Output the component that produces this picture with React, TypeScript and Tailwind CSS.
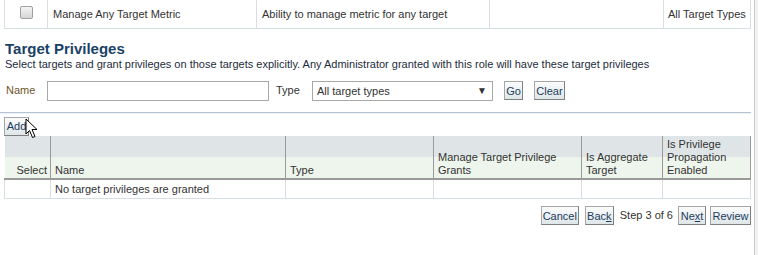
import React from "react";

const font = { fontFamily: "Tahoma, 'Liberation Sans', Arial, sans-serif" };

function Btn({ children, className = "" }: { children: React.ReactNode; className?: string }) {
  return (
    <button
      className={`h-[19px] px-0 text-center border border-[#a6a6a6] border-b-[#7f7f7f] border-r-[#7f7f7f] bg-gradient-to-b from-[#fbfcfc] to-[#dfe6e8] leading-[16px] text-[#1c3d5e] whitespace-nowrap ${className}`}
    >
      {children}
    </button>
  );
}

const head = "align-bottom text-left font-normal pl-[4px] pb-[1px] leading-[13px] border-l border-[#9a9a9a] bg-gradient-to-b from-[#dfe4e6] from-50% to-[#eef5ec] to-50%";

export default function App() {
  return (
    <div className="flex w-[758px] h-[255px] bg-white overflow-hidden text-[11px] text-[#333]" style={font}>
      <div className="w-[754px] shrink-0">
        {/* previous privilege row */}
        <table className="ml-[4px] w-[747px] table-fixed border-collapse">
          <colgroup>
            <col className="w-[43px]" />
            <col className="w-[209px]" />
            <col className="w-[233px]" />
            <col className="w-[174px]" />
            <col />
          </colgroup>
          <tbody>
            <tr className="h-[28px] border-b border-[#d8dfe3]">
              <td className="border-l border-r border-[#d8dfe3] text-center">
                <span className="inline-block w-[13px] h-[13px] mt-[2px] rounded-[2px] border border-[#a0a0a0] bg-gradient-to-b from-[#f4f4f4] to-[#d6d6d6]" />
              </td>
              <td className="border-r border-[#d8dfe3] pl-[5px]">Manage Any Target Metric</td>
              <td className="border-r border-[#d8dfe3] pl-[5px]">Ability to manage metric for any target</td>
              <td className="border-r border-[#d8dfe3]"></td>
              <td className="border-r border-[#d8dfe3] pl-[4px] whitespace-nowrap">All Target Types</td>
            </tr>
          </tbody>
        </table>

        <div className="pl-[5px] pt-[10px]">
          <h2 className="text-[15px] font-bold leading-[19px] text-[#1a4266]">Target Privileges</h2>
          <p className="leading-[13px] text-[#1d2c3c]">
            Select targets and grant privileges on those targets explicitly. Any Administrator granted with this role will have these target privileges
          </p>
        </div>

        <div className="flex items-center h-[20px] mt-[10px] pl-[6px]">
          <span className="w-[41px] text-[#6e5528]">Name</span>
          <input className="w-[222px] h-[20px] border border-[#a8a8a8] outline-none" />
          <span className="ml-[7px] w-[36px] text-[#333]">Type</span>
          <div className="relative w-[181px] h-[20px] border border-[#a8a8a8] pl-[4px] leading-[18px]">
            All target types
            <span className="absolute right-[5px] top-0 text-[10px]">▼</span>
          </div>
          <Btn className="ml-[11px] w-[19px]">Go</Btn>
          <Btn className="ml-[11px] w-[31px]">Clear</Btn>
        </div>

        <div className="mt-[11px] h-[2px] w-[751px] border-t border-[#b4c4d0] bg-[#eef2f4]" />

        <div className="relative mt-[3px] pl-[4px] h-[19px]">
          <Btn className="h-[18px] w-[25px]">Add</Btn>
          <svg className="absolute left-[25px] top-[1px]" width="14" height="22" viewBox="0 0 14 22">
            <path d="M1 1 L1 16 L4.5 12.5 L7.5 19.5 L10 18.5 L7 11.5 L12 11.5 Z" fill="white" stroke="black" strokeWidth="1" strokeLinejoin="round" />
          </svg>
        </div>

        <table className="ml-[4px] w-[747px] table-fixed border-collapse">
          <colgroup>
            <col className="w-[46px]" />
            <col className="w-[235px]" />
            <col className="w-[148px]" />
            <col className="w-[148px]" />
            <col className="w-[81px]" />
            <col />
          </colgroup>
          <thead>
            <tr className="h-[43px] border-b-2 border-[#9a9a9a]">
              <th className="align-bottom text-right font-normal pr-[3px] pb-[1px] leading-[13px] bg-gradient-to-b from-[#dfe4e6] from-50% to-[#eef5ec] to-50%">
                Select
              </th>
              <th className={head}>Name</th>
              <th className={head}>Type</th>
              <th className={head}>
                Manage Target Privilege
                <br />
                Grants
              </th>
              <th className={head}>
                Is Aggregate
                <br />
                Target
              </th>
              <th className={`${head} border-r`}>
                Is Privilege
                <br />
                Propagation
                <br />
                Enabled
              </th>
            </tr>
          </thead>
          <tbody>
            <tr className="h-[20px] border-b border-[#d8dfe3]">
              <td className="border-l border-r border-[#d8dfe3]"></td>
              <td className="border-r border-[#d8dfe3] pl-[4px]">No target privileges are granted</td>
              <td className="border-r border-[#d8dfe3]"></td>
              <td className="border-r border-[#d8dfe3]"></td>
              <td className="border-r border-[#d8dfe3]"></td>
              <td className="border-r border-[#d8dfe3]"></td>
            </tr>
          </tbody>
        </table>

        <div className="flex items-center justify-end w-[751px] mt-[7px]">
          <Btn className="w-[38px]">Cancel</Btn>
          <Btn className="ml-[6px] w-[29px]">
            Bac<span className="underline">k</span>
          </Btn>
          <span className="ml-[6px] mr-[5px]">Step 3 of 6</span>
          <Btn className="w-[28px]">
            Ne<span className="underline">x</span>t
          </Btn>
          <Btn className="ml-[4px] w-[41px]">Review</Btn>
        </div>
      </div>
      <div className="w-[4px] border-l border-[#c9c9c9] bg-[#f2f2f2]" />
    </div>
  );
}
